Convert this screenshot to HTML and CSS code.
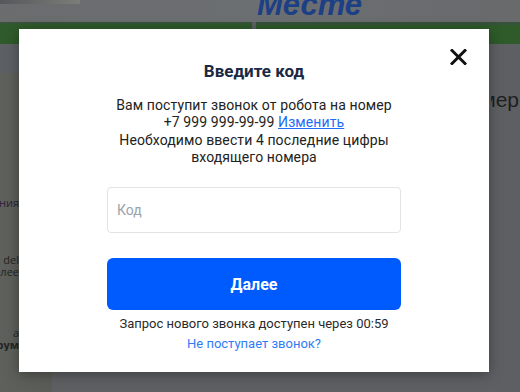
FILE: index.html
```html
<!DOCTYPE html>
<html lang="ru">
<head>
<meta charset="utf-8">
<title>Введите код</title>
<link rel="stylesheet" href="styles.css">
</head>
<body>
<div class="page">
  <header class="hero">
    <div class="hero-photo"></div>
    <span class="hero-title">Месте</span>
  </header>
  <nav class="nav">
    <div class="nav-left"></div>
    <div class="nav-right"></div>
  </nav>
  <main class="content">
    <aside class="side">
      <div class="side-top"></div>
      <p class="side-text purple">решения</p>
      <p class="side-text s2">del</p>
      <p class="side-text">более</p>
      <p class="side-text s3">а</p>
      <p class="side-text"><b>рум</b></p>
    </aside>
    <section class="main-col">
      <p class="main-text">номер</p>
    </section>
  </main>
</div>

<div class="overlay">
  <div class="modal" role="dialog">
    <button class="close" aria-label="Закрыть">
      <svg width="17" height="16" viewBox="0 0 17 16"><path d="M2 1.5L15 14.5M15 1.5L2 14.5" stroke="#111" stroke-width="3" stroke-linecap="square"/></svg>
    </button>
    <h2 class="title">Введите код</h2>
    <p class="info">Вам поступит звонок от робота на номер<br>+7 999 999-99-99 <a href="#" class="change">Изменить</a><br>Необходимо ввести 4 последние цифры<br>входящего номера</p>
    <input class="code" type="text" placeholder="Код">
    <button class="next">Далее</button>
    <p class="timer">Запрос нового звонка доступен через 00:59</p>
    <a href="#" class="nocall">Не поступает звонок?</a>
  </div>
</div>
</body>
</html>
```

FILE: styles.css
```css
* { box-sizing: border-box; }
html, body { margin: 0; padding: 0; }
body {
  width: 520px;
  height: 392px;
  overflow: hidden;
  background: #5d5f62;
  font-family: Roboto, "Noto Sans", Arial, sans-serif;
  position: relative;
}
.page { width: 520px; height: 392px; display: flex; flex-direction: column; }
.hero {
  height: 22px;
  background: linear-gradient(90deg, #6a6c6e 0%, #6c6f71 50%, #686a6c 100%);
  position: relative;
  overflow: hidden;
  display: flex;
}
.hero-photo {
  width: 80px;
  height: 4px;
  background: linear-gradient(90deg, #55585a, #7c7d78);
}
.hero-title {
  position: absolute;
  left: 257px;
  top: -13px;
  font-family: "Liberation Sans", Arial, sans-serif;
  font-weight: bold;
  font-style: italic;
  font-size: 31px;
  color: #1d3f86;
}
.nav { height: 22px; display: flex; gap: 4px; background: #5d6063; }
.nav-left { width: 252px; background: #2f5a2b; border-top: 2px solid #36553a; }
.nav-right { flex: 1; background: #2e5b29; border-top: 3px solid #36523a; }
.content { flex: 1; display: flex; }
.side {
  width: 52px;
  background: linear-gradient(90deg, #5e605b, #5a5c57);
  display: flex;
  flex-direction: column;
}
.side-top { height: 29px; width: 100%; background: #5c6065; flex: none; }
.side-text {
  margin: 0;
  width: 19px;
  height: 12px;
  overflow: hidden;
  white-space: nowrap;
  direction: rtl;
  text-align: right;
  font-family: "Open Sans", sans-serif;
  font-size: 11px;
  line-height: 12px;
  color: #242424;
}
.side-text.purple { color: #2e1f3c; margin-top: 124px; }
.side-text.s2 { margin-top: 45px; }
.side-text.s3 { margin-top: 49px; }
.main-col { flex: 1; background: #5d5f62; overflow: hidden; display: flex; justify-content: flex-end; }
.main-text {
  margin: 44px 1px 0 0;
  width: 28px;
  overflow: hidden;
  direction: rtl;
  text-align: right;
  font-family: "Liberation Sans", Arial, sans-serif;
  font-size: 21px;
  line-height: 24px;
  height: 24px;
  color: #1e1f20;
  white-space: nowrap;
}

.overlay {
  position: absolute;
  inset: 0;
  padding: 29px 0 0 19px;
}
.modal {
  position: relative;
  width: 470px;
  height: 343px;
  background: #fff;
  box-shadow: 0 2px 12px rgba(0,0,0,0.35);
  display: flex;
  flex-direction: column;
  align-items: center;
  padding: 31px 88px 0;
}
.close {
  position: absolute;
  right: 22px;
  top: 20px;
  padding: 0;
  border: 0;
  background: none;
  width: 17px;
  height: 16px;
  display: flex;
}
.title {
  margin: 0;
  font-size: 17px;
  line-height: 22px;
  font-weight: 700;
  color: #1b2a44;
}
.info {
  margin: 15px 0 0;
  font-size: 14px;
  letter-spacing: 0.1px;
  line-height: 17.3px;
  color: #222;
  text-align: center;
  white-space: nowrap;
}
.change { color: #1f6cf5; text-decoration: underline; }
.code {
  margin-top: 21px;
  width: 294px;
  height: 46px;
  border: 1.5px solid #e3e3e3;
  border-radius: 4px;
  padding: 0 9px;
  font-family: inherit;
  font-size: 14px;
  outline: none;
}
.code::placeholder { color: #9aa3ad; }
.next {
  margin-top: 25px;
  width: 294px;
  height: 52px;
  border: 0;
  border-radius: 6px;
  background: #005bff;
  color: #fff;
  font-family: inherit;
  font-weight: 700;
  font-size: 16px;
}
.timer {
  margin: 6px 0 0;
  font-size: 13px;
  line-height: 16px;
  color: #2a2a2a;
}
.nocall {
  margin-top: 4px;
  font-size: 13px;
  line-height: 16px;
  color: #2e7df5;
  text-decoration: none;
}
```
